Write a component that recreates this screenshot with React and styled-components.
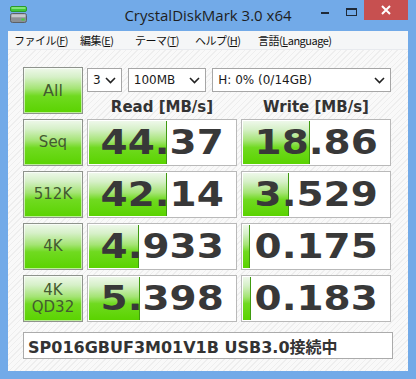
import React from 'react'
import styled, { createGlobalStyle } from 'styled-components'

const GlobalStyle = createGlobalStyle`
  html, body {
    margin: 0;
    padding: 0;
    background: #ffffff;
  }
  * {
    box-sizing: border-box;
  }
`

const Window = styled.div`
  width: 416px;
  height: 379px;
  display: flex;
  flex-direction: column;
  padding: 0 8px 8px;
  background: #72aae8;
  font-family: 'DejaVu Sans', 'Noto Sans CJK JP', sans-serif;
  color: #222;
`

const TitleBar = styled.div`
  height: 31px;
  display: grid;
  grid-template-columns: 1fr auto 1fr;
  align-items: start;
`

const AppIcon = styled.div`
  margin: 6px 0 0 2px;
  width: 17px;
  height: 18px;
`

const Title = styled.div`
  margin-top: 5px;
  font-family: 'Open Sans', 'Noto Sans', sans-serif;
  font-size: 15px;
  line-height: 20px;
  color: #1e1e1e;
`

const Controls = styled.div`
  display: flex;
  justify-content: flex-end;
  align-items: flex-start;
`

const CaptionButton = styled.div`
  width: ${p => (p.$close ? 44 : 26)}px;
  height: 20px;
  display: flex;
  align-items: center;
  justify-content: center;
  background: ${p => (p.$close ? '#c75050' : 'transparent')};
`

const MinGlyph = styled.div`
  width: 8px;
  height: 2px;
  margin-top: 6px;
  background: #1f2a38;
`

const MaxGlyph = styled.div`
  width: 11px;
  height: 8px;
  margin-top: 3px;
  border: 1px solid #1f2a38;
  border-top-width: 2px;
`

const MenuBar = styled.div`
  height: 19px;
  display: flex;
  align-items: center;
  padding-left: 6px;
  background: #f5f6f7;
  border-bottom: 1px solid #e8eaee;
  font-family: 'Noto Sans CJK JP', sans-serif;
  font-size: 11px;
  color: #111;
`

const MenuItem = styled.span`
  width: ${p => p.$w}px;
  white-space: nowrap;
  letter-spacing: -0.5px;
  u {
    text-decoration: underline;
    text-underline-offset: 1px;
  }
`

const Client = styled.div`
  flex: 1;
  padding: 17px 16px 12px 15px;
  background: repeating-linear-gradient(
    135deg,
    #f9f9f9 0px,
    #f9f9f9 3px,
    #eeeeee 3px,
    #eeeeee 4px
  );
`

const Board = styled.div`
  display: grid;
  grid-template-columns: 60px 150px 150px;
  grid-auto-rows: 47px;
  column-gap: 4px;
  row-gap: 5px;
`

const GREEN = `linear-gradient(
  180deg,
  #eef8ea 0%,
  #d6f0c8 20%,
  #a4e474 46%,
  #70da20 62%,
  #5ad300 100%
)`

const TestButton = styled.div`
  display: flex;
  flex-direction: column;
  align-items: center;
  justify-content: center;
  border: 1px solid #8e938c;
  box-shadow: inset 0 0 0 1px rgba(255, 255, 255, 0.6);
  background: ${GREEN};
  font-size: ${p => (p.$big ? 16 : 15)}px;
  line-height: 17px;
  color: #435a30;
`

const TopPanel = styled.div`
  grid-column: 2 / span 2;
  display: flex;
  flex-direction: column;
`

const ComboRow = styled.div`
  margin-top: 1px;
  display: flex;
  gap: 6px;
`

const Combo = styled.div`
  width: ${p => p.$w}px;
  height: 24px;
  display: flex;
  align-items: center;
  justify-content: space-between;
  padding: 0 5px 0 5px;
  background: #ffffff;
  border: 1px solid #a6a6a6;
  font-size: 12px;
  color: #1a1a1a;
  white-space: nowrap;
`

const Chevron = () => (
  <svg width="11" height="7" viewBox="0 0 11 7">
    <polyline points="1,1 5.5,5.5 10,1" fill="none" stroke="#222" strokeWidth="1.6" />
  </svg>
)

const Headers = styled.div`
  margin-top: 7px;
  display: grid;
  grid-template-columns: 150px 150px;
  column-gap: 4px;
`

const Header = styled.div`
  text-align: center;
  font-weight: bold;
  font-size: 15px;
  line-height: 16px;
  color: #333;
`

const ValueBox = styled.div`
  position: relative;
  overflow: hidden;
  display: flex;
  align-items: center;
  justify-content: center;
  padding: 1px;
  background: #ffffff;
  border: 1px solid #b9b9b9;
`

const Bar = styled.div`
  position: absolute;
  left: 1px;
  top: 1px;
  bottom: 1px;
  background: ${GREEN};
  border-right: 1px solid #3f9a10;
`

const Value = styled.span`
  position: relative;
  display: inline-block;
  transform: scaleX(1.18);
  font-weight: bold;
  font-size: 33px;
  line-height: 40px;
  color: #383838;
`

const Status = styled.div`
  margin-top: 10px;
  height: 27px;
  width: 370px;
  display: flex;
  align-items: center;
  padding-left: 4px;
  background: #ffffff;
  border: 1px solid #ababab;
  font-weight: bold;
  font-size: 16px;
  color: #333;
  white-space: nowrap;
`

const DriveIcon = () => (
  <svg width="17" height="18" viewBox="0 0 17 18">
    <rect x="0.5" y="0.5" width="16" height="5" rx="1.5" fill="#3fc83a" stroke="#2c9a2a" />
    <rect x="1.5" y="1.2" width="14" height="1.6" fill="#8fe98a" />
    <rect x="0.5" y="7.5" width="16" height="9" rx="2" fill="#8c9096" stroke="#5c6066" />
    <rect x="1.5" y="8.3" width="14" height="3" fill="#c4c7cb" />
    <rect x="11.5" y="12.5" width="3" height="2" fill="#3fd23a" />
  </svg>
)

const rows = [
  { label: ['Seq'], read: '44.37', write: '18.86' },
  { label: ['512K'], read: '42.14', write: '3.529' },
  { label: ['4K'], read: '4.933', write: '0.175' },
  { label: ['4K', 'QD32'], read: '5.398', write: '0.183' },
]

// log scale, 10 KB/s .. 10 GB/s over the inner width
const barWidth = v => Math.max(0, Math.round((148 * (Math.log10(parseFloat(v)) + 1)) / 5))

const Cell = ({ value }) => (
  <ValueBox>
    <Bar style={{ width: barWidth(value) }} />
    <Value>{value}</Value>
  </ValueBox>
)

export default function App() {
  return (
    <>
      <GlobalStyle />
      <Window>
        <TitleBar>
          <AppIcon>
            <DriveIcon />
          </AppIcon>
          <Title>CrystalDiskMark 3.0 x64</Title>
          <Controls>
            <CaptionButton>
              <MinGlyph />
            </CaptionButton>
            <CaptionButton>
              <MaxGlyph />
            </CaptionButton>
            <CaptionButton $close>
              <svg width="10" height="10" viewBox="0 0 10 10">
                <path d="M1,1 L9,9 M9,1 L1,9" stroke="#fff" strokeWidth="2" />
              </svg>
            </CaptionButton>
          </Controls>
        </TitleBar>

        <MenuBar>
          <MenuItem $w={66}>ファイル(<u>F</u>)</MenuItem>
          <MenuItem $w={55}>編集(<u>E</u>)</MenuItem>
          <MenuItem $w={60}>テーマ(<u>T</u>)</MenuItem>
          <MenuItem $w={63}>ヘルプ(<u>H</u>)</MenuItem>
          <MenuItem>言語(<u>L</u>anguage)</MenuItem>
        </MenuBar>

        <Client>
          <Board>
            <TestButton $big>All</TestButton>
            <TopPanel>
              <ComboRow>
                <Combo $w={35}>
                  <span>3</span>
                  <Chevron />
                </Combo>
                <Combo $w={79}>
                  <span>100MB</span>
                  <Chevron />
                </Combo>
                <Combo $w={180}>
                  <span>H: 0% (0/14GB)</span>
                  <Chevron />
                </Combo>
              </ComboRow>
              <Headers>
                <Header>Read [MB/s]</Header>
                <Header>Write [MB/s]</Header>
              </Headers>
            </TopPanel>

            {rows.map(r => (
              <React.Fragment key={r.label.join('')}>
                <TestButton>
                  {r.label.map(l => (
                    <span key={l}>{l}</span>
                  ))}
                </TestButton>
                <Cell value={r.read} />
                <Cell value={r.write} />
              </React.Fragment>
            ))}
          </Board>
          <Status>SP016GBUF3M01V1B USB3.0接続中</Status>
        </Client>
      </Window>
    </>
  )
}
